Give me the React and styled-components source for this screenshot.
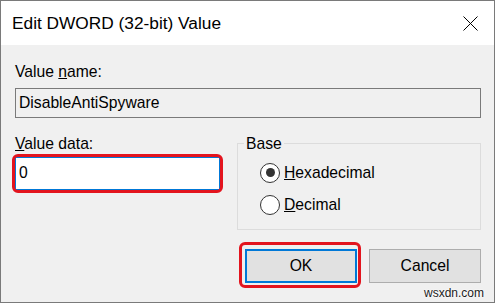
import React from "react";
import styled, { createGlobalStyle } from "styled-components";

const GlobalStyle = createGlobalStyle`
  html, body { margin: 0; padding: 0; background: #ffffff; }
  body { font-family: "Liberation Sans", Arial, sans-serif; color: #000; }
  * { box-sizing: border-box; }
`;

const Window = styled.div`
  position: relative;
  width: 495px;
  height: 303px;
  border: 1px solid #7a7a7a;
  display: flex;
  flex-direction: column;
  background: #f0f0f0;
`;

const TitleBar = styled.div`
  flex: none;
  height: 44px;
  background: #ffffff;
  display: flex;
  align-items: center;
  justify-content: space-between;
  padding: 0 16px 0 11px;
`;

const Title = styled.div`
  font-size: 17.3px;
  line-height: 20px;
  color: #000;
`;

const CloseIcon = styled.svg`
  width: 15px;
  height: 15px;
  display: block;
`;

const Body = styled.div`
  flex: 1;
  display: flex;
  flex-direction: column;
  padding: 17.5px 13px 0 14px;
`;

const Label = styled.div`
  font-size: 15.7px;
  line-height: 18px;
  height: 18px;
  white-space: nowrap;
`;

const NameField = styled.div`
  margin-top: 7.5px;
  height: 30px;
  border: 1px solid #7a7a7a;
  background: #f0f0f0;
  display: flex;
  align-items: center;
  padding-left: 3px;
  font-size: 15.7px;
`;

const Row = styled.div`
  display: grid;
  grid-template-columns: 205px 244px;
  column-gap: 17px;
  margin-top: 16.6px;
  align-items: start;
`;

const DataColumn = styled.div`
  display: flex;
  flex-direction: column;
`;

const Annotated = styled.div`
  position: relative;
  margin-top: ${(p) => p.$mt || 0}px;
`;

const RedRing = styled.span`
  position: absolute;
  pointer-events: none;
  border: 3px solid #e3141e;
  border-radius: 6px;
  top: ${(p) => p.$t}px;
  left: ${(p) => p.$l}px;
  right: ${(p) => p.$r}px;
  bottom: ${(p) => p.$b}px;
`;

const DataInput = styled.input`
  display: block;
  width: 205px;
  height: 33px;
  border: 1px solid #0078d7;
  background: #ffffff;
  padding: 0 0 0 3px;
  margin: 0;
  font-family: "Liberation Sans", Arial, sans-serif;
  font-size: 15.7px;
  color: #000;
  outline: none;
`;

const Group = styled.fieldset`
  margin: 0;
  min-width: 0;
  height: 95.4px;
  border: 1px solid #dcdcdc;
  padding: 0 8px 0 6px;
`;

const Legend = styled.legend`
  padding: 0 2px;
  font-size: 15.7px;
  line-height: 18px;
`;

const RadioList = styled.div`
  display: flex;
  flex-direction: column;
  gap: 8.3px;
  padding-left: 16px;
  margin-top: 8px;
`;

const RadioRow = styled.label`
  display: flex;
  align-items: center;
  gap: 4px;
  height: 24px;
  font-size: 15.7px;
  white-space: nowrap;
`;

const RadioCircle = styled.span`
  flex: none;
  width: 20px;
  height: 20px;
  border: 1px solid #333;
  border-radius: 50%;
  background: #fff;
  display: flex;
  align-items: center;
  justify-content: center;
  &::after {
    content: "";
    width: 9px;
    height: 9px;
    border-radius: 50%;
    background: #333;
    display: ${(p) => (p.$checked ? "block" : "none")};
  }
`;

const Buttons = styled.div`
  display: flex;
  justify-content: flex-end;
  gap: 12px;
  margin-top: 19px;
`;

const Button = styled.button`
  display: block;
  width: 112px;
  height: 34px;
  margin: 0;
  padding: 0;
  background: #e1e1e1;
  border: ${(p) => (p.$default ? "2px solid #0078d7" : "1px solid #adadad")};
  font-family: "Liberation Sans", Arial, sans-serif;
  font-size: 15.7px;
  color: #000;
`;

const Watermark = styled.div`
  position: absolute;
  right: 10px;
  top: 285px;
  font-size: 12px;
  line-height: 14px;
  color: #1a1a1a;
  text-shadow: 0 0 2px #fff, 0 0 2px #fff;
`;

export default function App() {
  return (
    <>
      <GlobalStyle />
      <Window>
        <TitleBar>
          <Title>Edit DWORD (32-bit) Value</Title>
          <CloseIcon viewBox="0 0 15 15">
            <path d="M0.5 0.5 L14.5 14.5 M14.5 0.5 L0.5 14.5" stroke="#000" strokeWidth="1" fill="none" />
          </CloseIcon>
        </TitleBar>
        <Body>
          <Label>
            Value <u>n</u>ame:
          </Label>
          <NameField>DisableAntiSpyware</NameField>
          <Row>
            <DataColumn>
              <Label>
                <u>V</u>alue data:
              </Label>
              <Annotated $mt={4.4}>
                <DataInput readOnly defaultValue="0" />
                <RedRing $t={-3} $l={-3} $r={-3} $b={-3} />
              </Annotated>
            </DataColumn>
            <Group>
              <Legend>Base</Legend>
              <RadioList>
                <RadioRow>
                  <RadioCircle $checked />
                  <span>
                    <u>H</u>exadecimal
                  </span>
                </RadioRow>
                <RadioRow>
                  <RadioCircle />
                  <span>
                    <u>D</u>ecimal
                  </span>
                </RadioRow>
              </RadioList>
            </Group>
          </Row>
          <Buttons>
            <Annotated>
              <Button $default>OK</Button>
              <RedRing $t={-7} $l={-6} $r={-4} $b={-5} />
            </Annotated>
            <Button>Cancel</Button>
          </Buttons>
        </Body>
        <Watermark>wsxdn.com</Watermark>
      </Window>
    </>
  );
}
